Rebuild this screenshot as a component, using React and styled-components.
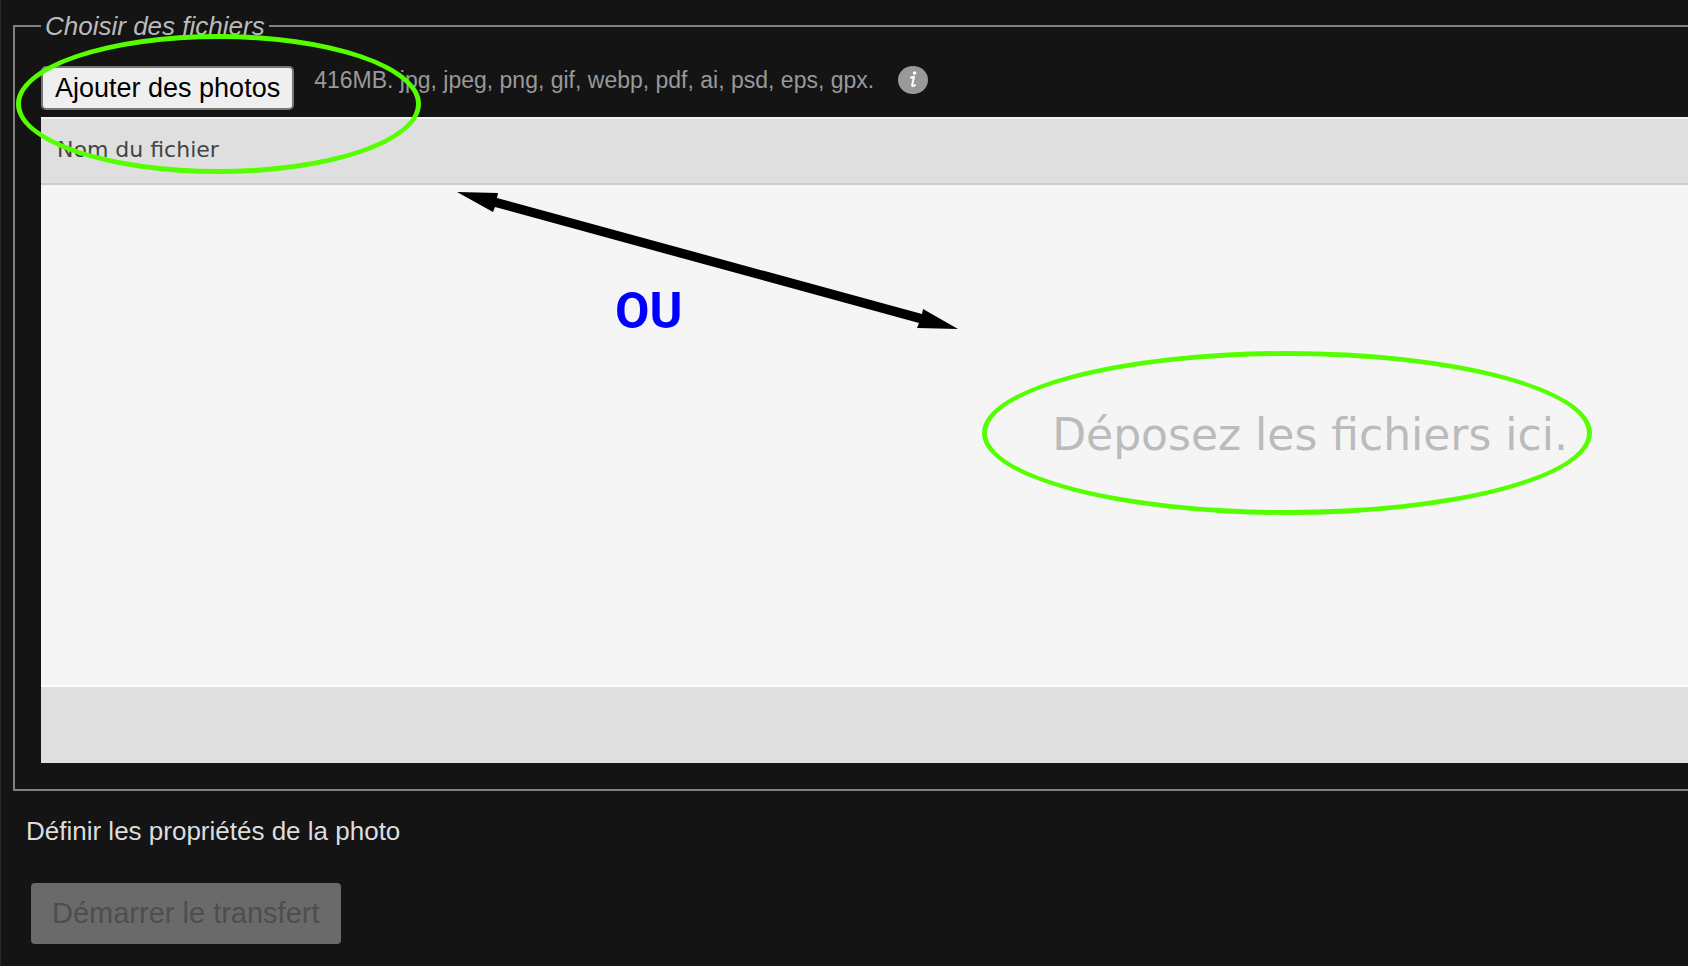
import styled, { createGlobalStyle } from "styled-components";

const GlobalStyle = createGlobalStyle`
  * {
    box-sizing: border-box;
  }
  body {
    margin: 0;
    background-color: #141414;
    color: #ddd;
    font-family: "Liberation Sans", Arial, sans-serif;
    font-size: 26px;
    line-height: 28px;
  }
`;

const UploadPage = styled.main`
  min-height: 100vh;
  padding: 12px 0 20px 12px;
  border-left: 1px solid #2a2a2a;
  overflow: hidden;
`;

const UploadForm = styled.form`
  display: flex;
  flex-direction: column;
`;

/* le cadre continue au-delà du bord droit */
const FileFieldset = styled.fieldset`
  position: relative;
  min-width: 0;
  margin: 0;
  padding: 26px 0 26px 26px;
  border: 2px solid #808080;
  border-right: none;

  legend {
    padding: 0 4px;
    color: #bbb;
    font-style: italic;
  }
`;

const Toolbar = styled.div`
  display: flex;
  align-items: flex-start;
  gap: 20px;
  margin-bottom: 7px;
`;

const AddButton = styled.button`
  height: 44px;
  padding: 0 12px;
  border: 2px solid #767676;
  border-radius: 5px;
  background-color: #efefef;
  color: #000;
  font-family: inherit;
  font-size: 27px;
  line-height: 30px;
`;

const FileHint = styled.p`
  display: flex;
  align-items: center;
  gap: 24px;
  margin: 0;
  color: #999;
  font-size: 23px;
  line-height: 28px;

  svg {
    flex-shrink: 0;
  }
`;

const FileTable = styled.table`
  width: 100%;
  border-collapse: separate;
  border-spacing: 0;
  font-family: Verdana, "DejaVu Sans", sans-serif;

  th {
    height: 68px;
    padding: 0 16px 2px;
    border-top: 2px solid #f2f2f2;
    border-bottom: 2px solid #ccc;
    background-color: #dfdfdf;
    color: #444;
    font-size: 22px;
    font-weight: normal;
    text-align: left;
  }
  tfoot td {
    height: 78px;
    padding: 0;
    border-top: 2px solid #fff;
    background-color: #dfdfdf;
  }
`;

const DropZone = styled.td`
  position: relative;
  height: 500px;
  padding: 0 120px 0 0;
  background-color: #f5f5f5;
  color: #bbb;
  font-size: 44px;
  line-height: 56px;
  text-align: right;
`;

const DropLabel = styled.span`
  position: relative;
  display: inline-block;
`;

const PropertiesTitle = styled.p`
  margin: 26px 13px 38px;
`;

const StartButton = styled.button`
  align-self: flex-start;
  height: 61px;
  margin-left: 18px;
  padding: 0 21px;
  border: none;
  border-radius: 4px;
  background-color: #6a6a6a;
  color: #4e4e4e;
  font-family: inherit;
  font-size: 29px;
`;

/* annotations dessinées par-dessus le formulaire */
const Circle = styled.span`
  position: absolute;
  top: ${(props) => props.$top}px;
  left: ${(props) => props.$left}px;
  width: ${(props) => props.$width}px;
  height: ${(props) => props.$height}px;
  border: 5px solid #55ff00;
  border-radius: 50%;
  pointer-events: none;
`;

const Arrow = styled.svg`
  position: absolute;
  top: 7px;
  left: 416px;
`;

const OrMark = styled.strong`
  position: absolute;
  top: 99px;
  left: 574px;
  color: #0000ff;
  font-family: Roboto, sans-serif;
  font-size: 50px;
  font-weight: bold;
  line-height: 54px;
`;

const InfoIcon = () => (
  <svg width="30" height="28" viewBox="0 0 30 28" aria-label="Information">
    <ellipse cx="15" cy="14" rx="15" ry="14" fill="#999" />
    <circle cx="16.6" cy="7" r="1.8" fill="#fff" />
    <path
      d="M13 11.600Q14.500 11.400 16 10.800L14.200 19Q14 20.800 17 19.200"
      fill="none"
      stroke="#fff"
      strokeWidth="2"
      strokeLinecap="round"
      strokeLinejoin="round"
    />
  </svg>
);

const App = () => {
  const maxSize = "416MB";
  const fileTypes = [
    "jpg",
    "jpeg",
    "png",
    "gif",
    "webp",
    "pdf",
    "ai",
    "psd",
    "eps",
    "gpx",
  ];

  return (
    <>
      <GlobalStyle />
      <UploadPage>
        <UploadForm>
          <FileFieldset>
            <legend>Choisir des fichiers</legend>
            <Toolbar>
              <AddButton type="button">Ajouter des photos</AddButton>
              <FileHint>
                {`${maxSize}. ${fileTypes.join(", ")}.`}
                <InfoIcon />
              </FileHint>
            </Toolbar>
            <FileTable>
              <thead>
                <tr>
                  <th scope="col">Nom du fichier</th>
                </tr>
              </thead>
              <tbody>
                <tr>
                  <DropZone>
                    <DropLabel>
                      Déposez les fichiers ici.
                      <Circle $top={-56} $left={-70} $width={610} $height={164} />
                    </DropLabel>
                    <Arrow width="502" height="138" viewBox="0 0 502 138">
                      <path d="M0 0L41 1L40 6L465 122L466 117L501 137L460 136L462 131L38 15L36 20Z" />
                    </Arrow>
                    <OrMark>OU</OrMark>
                  </DropZone>
                </tr>
              </tbody>
              <tfoot>
                <tr>
                  <td />
                </tr>
              </tfoot>
            </FileTable>
            <Circle $top={-6} $left={1} $width={405} $height={140} />
          </FileFieldset>
          <PropertiesTitle>Définir les propriétés de la photo</PropertiesTitle>
          <StartButton type="submit" disabled>
            Démarrer le transfert
          </StartButton>
        </UploadForm>
      </UploadPage>
    </>
  );
};

export default App;
